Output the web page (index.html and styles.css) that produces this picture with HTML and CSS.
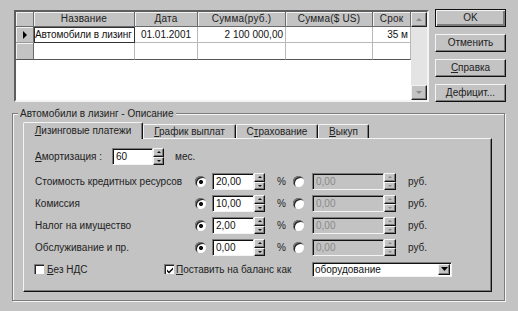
FILE: index.html
```html
<!DOCTYPE html>
<html>
<head>
<meta charset="utf-8">
<link rel="stylesheet" href="styles.css">
</head>
<body>
<div class="dlg">
  <div class="top">
    <div class="grid">
      <div class="table">
        <div class="hc"></div>
        <div class="hc">Название</div>
        <div class="hc">Дата</div>
        <div class="hc">Сумма(руб.)</div>
        <div class="hc">Сумма($ US)</div>
        <div class="hc">Срок</div>

        <div class="ic"><svg width="6" height="8" viewBox="0 0 6 8"><path d="M1 0 L5 4 L1 8 Z" fill="#000"/></svg></div>
        <div class="dc focus">Автомобили в лизинг</div>
        <div class="dc c">01.01.2001</div>
        <div class="dc r">2 100 000,00</div>
        <div class="dc"></div>
        <div class="dc r">35 м</div>

        <div class="ic last"></div>
        <div class="dc last"></div>
        <div class="dc last"></div>
        <div class="dc last"></div>
        <div class="dc last"></div>
        <div class="dc last"></div>
      </div>
      <div class="vscroll">
        <div class="sbtn"><span class="ar up"></span></div>
        <div class="track"></div>
        <div class="sbtn"><span class="ar dn"></span></div>
      </div>
    </div>
    <div class="btns">
      <div class="btn def">OK</div>
      <div class="btn">Отменить</div>
      <div class="btn"><u>С</u>правка</div>
      <div class="btn"><u>Д</u>ефицит...</div>
    </div>
  </div>

  <div class="group">
    <span class="legend">Автомобили в лизинг - Описание</span>
    <div class="tabs">
      <div class="tab sel"><u>Л</u>изинговые платежи</div>
      <div class="tab w2"><u>Г</u>рафик выплат</div>
      <div class="tab w3">С<u>т</u>рахование</div>
      <div class="tab w4"><u>В</u>ыкуп</div>
    </div>
    <div class="page">
      <div class="row amort">
        <span class="lbl-a"><u>А</u>мортизация :</span>
        <span class="edit e-a">60</span>
        <span class="spin"><i class="u"></i><i class="d"></i></span>
        <span class="unit">мес.</span>
      </div>

      <div class="row">
        <span class="lbl">Стоимость кредитных ресурсов</span>
        <span class="radio on"></span>
        <span class="edit e1">20,00</span>
        <span class="spin"><i class="u"></i><i class="d"></i></span>
        <span class="pct">%</span>
        <span class="radio"></span>
        <span class="edit e2 dis">0,00</span>
        <span class="spin s2 dis"><i class="u"></i><i class="d"></i></span>
        <span class="unit">руб.</span>
      </div>

      <div class="row">
        <span class="lbl">Комиссия</span>
        <span class="radio on"></span>
        <span class="edit e1">10,00</span>
        <span class="spin"><i class="u"></i><i class="d"></i></span>
        <span class="pct">%</span>
        <span class="radio"></span>
        <span class="edit e2 dis">0,00</span>
        <span class="spin s2 dis"><i class="u"></i><i class="d"></i></span>
        <span class="unit">руб.</span>
      </div>

      <div class="row">
        <span class="lbl">Налог на имущество</span>
        <span class="radio on"></span>
        <span class="edit e1">2,00</span>
        <span class="spin"><i class="u"></i><i class="d"></i></span>
        <span class="pct">%</span>
        <span class="radio"></span>
        <span class="edit e2 dis">0,00</span>
        <span class="spin s2 dis"><i class="u"></i><i class="d"></i></span>
        <span class="unit">руб.</span>
      </div>

      <div class="row">
        <span class="lbl">Обслуживание и пр.</span>
        <span class="radio on"></span>
        <span class="edit e1">0,00</span>
        <span class="spin"><i class="u"></i><i class="d"></i></span>
        <span class="pct">%</span>
        <span class="radio"></span>
        <span class="edit e2 dis">0,00</span>
        <span class="spin s2 dis"><i class="u"></i><i class="d"></i></span>
        <span class="unit">руб.</span>
      </div>

      <div class="row chkrow">
        <span class="cbw1"><span class="cb"></span><span class="cbl"><u>Б</u>ез НДС</span></span>
        <span class="cbw2"><span class="cb"><svg width="8" height="8" viewBox="0 0 8 8"><path d="M1 3.5 L3 5.5 L7 1.5 L7 3.5 L3 7.5 L1 5.5 Z" fill="#000"/></svg></span><span class="cbl"><u>П</u>оставить на баланс как</span></span>
        <span class="combo"><span class="ctext">оборудование</span><span class="cbtn"><svg width="7" height="4" viewBox="0 0 7 4"><path d="M0 0 H7 L3.5 4 Z" fill="#000"/></svg></span></span>
      </div>
    </div>
  </div>
</div>
</body>
</html>
```

FILE: styles.css
```css
* { box-sizing: border-box; }
body {
  margin: 0;
  width: 518px;
  height: 311px;
  overflow: hidden;
  background: #c3c3c3;
  font: 10px "Liberation Sans", Arial, sans-serif;
  color: #111;
}
u { text-decoration: underline; text-underline-offset: 1px; }

.dlg { padding: 9px 0 0 12px; }

.top { display: flex; align-items: flex-start; gap: 6px; padding-left: 2px; }

.grid {
  display: flex;
  margin-top: 1px;
  height: 92px;
  border: 2px solid;
  border-color: #5e5e5e #f4f4f4 #f4f4f4 #5e5e5e;
  background: #fff;
}
.table {
  display: grid;
  grid-template-columns: 18px 101px 63px 88px 87px 38px;
  grid-template-rows: 15px 16px 17px;
  align-content: start;
}
.hc {
  background: #c3c3c3;
  border-right: 1px solid #6a6a6a;
  border-bottom: 1px solid #6a6a6a;
  box-shadow: inset 1px 1px #f2f2f2;
  text-align: center;
  line-height: 14px;
  white-space: nowrap;
  overflow: hidden;
  color: #222;
  letter-spacing: 0.2px;
}
.ic {
  background: #c3c3c3;
  border-right: 1px solid #6a6a6a;
  border-bottom: 1px solid #9a9a9a;
  box-shadow: inset 1px 1px #f2f2f2;
  display: flex;
  align-items: center;
  justify-content: center;
}
.dc {
  border-right: 1px solid #b8b8b8;
  border-bottom: 1px solid #b8b8b8;
  line-height: 15px;
  padding: 0 2px;
  white-space: nowrap;
  overflow: hidden;
}
.last { border-bottom-color: #555; }
.dc.c { text-align: center; }
.dc.r { text-align: right; }
.dc.focus { border: 1px solid #333; padding: 0; line-height: 14px; letter-spacing: -0.1px; }

.vscroll { width: 16px; display: flex; flex-direction: column; }
.sbtn {
  height: 15px;
  background: #c3c3c3;
  border: 1px solid;
  border-color: #f2f2f2 #222 #222 #f2f2f2;
  box-shadow: inset -1px -1px #808080;
  display: flex;
  align-items: center;
  justify-content: center;
}
.track {
  flex: 1;
  background: #e4e4e4;
}
.ar { width: 0; height: 0; border-left: 3px solid transparent; border-right: 3px solid transparent; }
.ar.up { border-bottom: 3px solid #8a8a8a; }
.ar.dn { border-top: 3px solid #8a8a8a; }

.btns { display: flex; flex-direction: column; gap: 7px; width: 71px; }
.btn {
  height: 18px;
  border: 1px solid;
  border-color: #f4f4f4 #111 #111 #f4f4f4;
  box-shadow: inset -1px -1px #7c7c7c;
  text-align: center;
  line-height: 15px;
  color: #222;
}
.btn.def {
  border-color: #111;
  box-shadow: inset 1px 1px #f4f4f4, inset -2px -2px #7c7c7c;
}

.group {
  position: relative;
  margin-top: 11px;
  width: 493px;
  height: 188px;
  border: 1px solid #7c7c7c;
  box-shadow: inset 1px 1px #f4f4f4, 1px 1px #f4f4f4;
  padding: 8px 12px 7px 10px;
}
.legend {
  position: absolute;
  top: -7px;
  left: 5px;
  padding: 0 2px;
  background: #c3c3c3;
  line-height: 13px;
  color: #222;
}

.tabs {
  display: flex;
  align-items: flex-start;
  height: 17px;
  margin-bottom: -1px;
  position: relative;
  z-index: 1;
}
.tab {
  height: 14px;
  margin-top: 2px;
  border-top: 1px solid #f4f4f4;
  border-left: 1px solid #f4f4f4;
  border-right: 1px solid #111;
  box-shadow: inset -1px 0 #7c7c7c;
  border-radius: 2px 2px 0 0;
  background: #c3c3c3;
  text-align: center;
  line-height: 13px;
  white-space: nowrap;
  color: #222;
}
.tab.sel { width: 120px; height: 17px; margin-top: 0; line-height: 15px; }
.tab.w2 { width: 93px; }
.tab.w3 { width: 82px; }
.tab.w4 { width: 51px; }

.page {
  width: 469px;
  height: 154px;
  border: 1px solid;
  border-color: #f4f4f4 #111 #111 #f4f4f4;
  box-shadow: inset -1px -1px #7c7c7c;
  padding: 9px 0 0 11px;
}

.row { display: flex; align-items: center; height: 17px; margin-bottom: 5px; white-space: nowrap; color: #222; }
.row.amort { margin-bottom: 8px; }
.lbl-a { width: 77px; }
.lbl { width: 160px; }

.edit {
  height: 17px;
  border: 1px solid;
  border-color: #7c7c7c #f4f4f4 #f4f4f4 #7c7c7c;
  box-shadow: inset 1px 1px #111;
  background: #fff;
  padding-left: 3px;
  line-height: 15px;
  color: #111;
}
.e-a { width: 41px; }
.e1 { width: 42px; }
.e2 { width: 72px; }
.edit.dis { background: #c3c3c3; color: #8a8a8a; }

.spin { display: flex; flex-direction: column; width: 11px; height: 17px; }
.spin.s2 { width: 12px; }
.spin i {
  flex: 1;
  border: 1px solid;
  border-color: #f4f4f4 #111 #111 #f4f4f4;
  box-shadow: inset -1px -1px #7c7c7c;
  background: #c3c3c3;
  display: flex;
  align-items: center;
  justify-content: center;
}
.spin i::after {
  content: "";
  width: 0; height: 0;
  border-left: 2px solid transparent;
  border-right: 2px solid transparent;
}
.spin i.u::after { border-bottom: 2px solid #111; }
.spin i.d::after { border-top: 2px solid #111; }
.spin.dis i.u::after { border-bottom-color: #8a8a8a; }
.spin.dis i.d::after { border-top-color: #8a8a8a; }

.unit { margin-left: 12px; }
.amort .unit { margin-left: 11px; }
.pct { margin-left: 12px; width: 16px; }

.radio {
  width: 11px;
  height: 11px;
  border-radius: 50%;
  background: #fff;
  box-shadow: inset 1px 1px #7c7c7c, inset 2px 2px #222;
  margin-right: 6px;
}
.pct + .radio { margin-right: 8px; }
.radio.on { background: radial-gradient(circle at 6px 6px, #111 0 1.8px, #fff 2.3px); }

.row.chkrow { margin-top: 3px; height: 16px; margin-bottom: 0; }
.cbw1 { width: 130px; display: flex; align-items: center; margin-left: -1px; }
.cbw2 { width: 148px; display: flex; align-items: center; }
.cb {
  width: 10px;
  height: 10px;
  background: #fff;
  box-shadow: inset 1px 1px #7c7c7c, inset 2px 2px #222;
  display: flex;
  align-items: center;
  justify-content: center;
  padding: 1px 0 0 1px;
}
.cbl { margin-left: 3px; }
.cbw2 .cbl { margin-left: 2px; }
.combo {
  width: 140px;
  height: 15px;
  display: flex;
  border: 1px solid;
  border-color: #7c7c7c #f4f4f4 #f4f4f4 #7c7c7c;
  box-shadow: inset 1px 1px #111;
  background: #fff;
  padding: 1px 1px 1px 2px;
}
.ctext { flex: 1; line-height: 12px; color: #111; }
.cbtn {
  width: 12px;
  border: 1px solid;
  border-color: #f4f4f4 #111 #111 #f4f4f4;
  box-shadow: inset -1px -1px #7c7c7c;
  background: #c3c3c3;
  display: flex;
  align-items: center;
  justify-content: center;
}
```
